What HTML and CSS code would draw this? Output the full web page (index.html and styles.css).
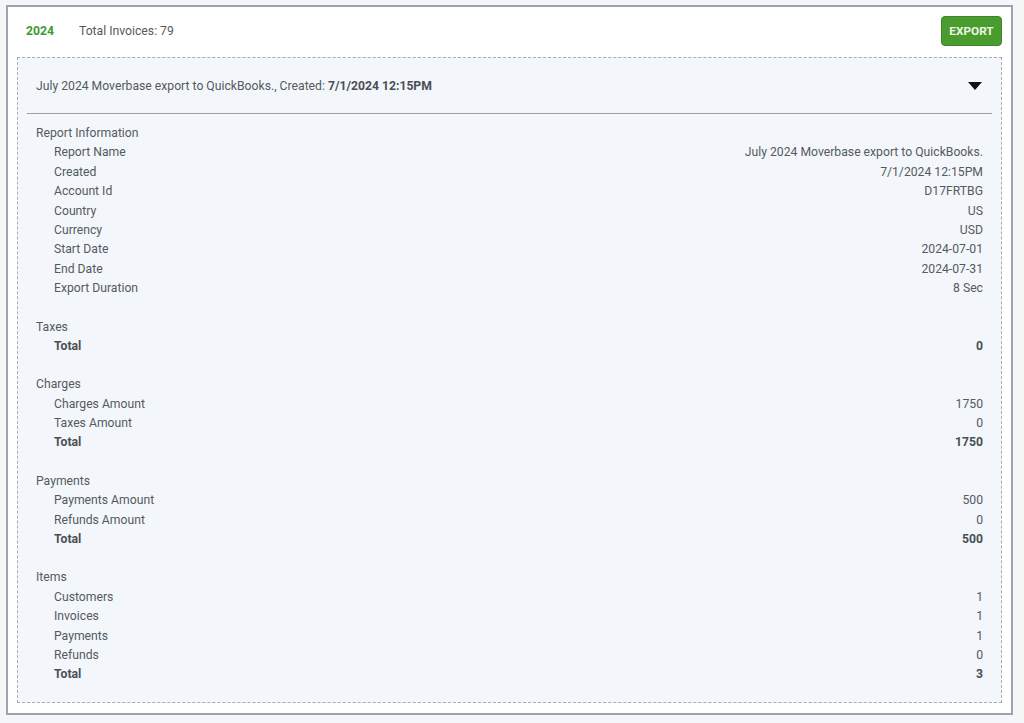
FILE: index.html
```html
<!DOCTYPE html>
<html lang="en">
<head>
<meta charset="utf-8">
<title>Exports</title>
<link rel="stylesheet" href="styles.css">
</head>
<body>
<div class="card">
  <div class="card-head">
    <span class="year">2024</span>
    <span class="count">Total Invoices: 79</span>
    <button class="export-btn">EXPORT</button>
  </div>
  <div class="report">
    <div class="report-head">
      <span class="report-title">July 2024 Moverbase export to QuickBooks., Created: <b>7/1/2024 12:15PM</b></span>
      <svg class="caret" width="14" height="8" viewBox="0 0 14 8"><path d="M0 0 H14 L7 8 Z" fill="#111"/></svg>
    </div>
    <div class="report-body">
      <div class="section">
        <div class="sec-title">Report Information</div>
        <div class="row"><span>Report Name</span><span>July 2024 Moverbase export to QuickBooks.</span></div>
        <div class="row"><span>Created</span><span>7/1/2024 12:15PM</span></div>
        <div class="row"><span>Account Id</span><span>D17FRTBG</span></div>
        <div class="row"><span>Country</span><span>US</span></div>
        <div class="row"><span>Currency</span><span>USD</span></div>
        <div class="row"><span>Start Date</span><span>2024-07-01</span></div>
        <div class="row"><span>End Date</span><span>2024-07-31</span></div>
        <div class="row"><span>Export Duration</span><span>8 Sec</span></div>
      </div>
      <div class="section">
        <div class="sec-title">Taxes</div>
        <div class="row total"><span>Total</span><span>0</span></div>
      </div>
      <div class="section">
        <div class="sec-title">Charges</div>
        <div class="row"><span>Charges Amount</span><span>1750</span></div>
        <div class="row"><span>Taxes Amount</span><span>0</span></div>
        <div class="row total"><span>Total</span><span>1750</span></div>
      </div>
      <div class="section">
        <div class="sec-title">Payments</div>
        <div class="row"><span>Payments Amount</span><span>500</span></div>
        <div class="row"><span>Refunds Amount</span><span>0</span></div>
        <div class="row total"><span>Total</span><span>500</span></div>
      </div>
      <div class="section">
        <div class="sec-title">Items</div>
        <div class="row"><span>Customers</span><span>1</span></div>
        <div class="row"><span>Invoices</span><span>1</span></div>
        <div class="row"><span>Payments</span><span>1</span></div>
        <div class="row"><span>Refunds</span><span>0</span></div>
        <div class="row total"><span>Total</span><span>3</span></div>
      </div>
    </div>
  </div>
</div>
</body>
</html>
```

FILE: styles.css
```css
* { box-sizing: border-box; }
html, body {
  margin: 0;
  padding: 0;
  background: #f5f6f8;
}
body {
  font-family: Roboto, "Liberation Sans", Arial, sans-serif;
  font-size: 12.2px;
  color: #555a5f;
}
.card {
  width: 1007px;
  margin: 5px 0 0 6px;
  background: #ffffff;
  border: 2px solid #9ca3b2;
  padding: 0 9px 10px 9px;
}
.card-head {
  height: 48px;
  display: flex;
  align-items: center;
  padding-left: 9px;
  margin-bottom: 2px;
}
.year {
  color: #3d9a2e;
  font-weight: 700;
}
.count {
  margin-left: 25px;
  color: #555a5f;
}
.export-btn {
  margin-left: auto;
  width: 61px;
  height: 30px;
  border: 1px solid #3c8526;
  border-radius: 4px;
  background: #4b9c2f;
  color: #eaf6e4;
  font-family: Roboto, "Liberation Sans", Arial, sans-serif;
  font-size: 11.8px;
  font-weight: 700;
  padding: 0;
}
.report {
  border: 1px dashed #a9adb3;
  background: #f3f7fb;
}
.report-head {
  height: 56px;
  margin: 0 9px;
  padding: 0 10px 0 9px;
  border-bottom: 1px solid #9aa0a8;
  display: flex;
  align-items: center;
  justify-content: space-between;
}
.report-title b { font-weight: 700; color: #4a4f55; }
.caret { display: block; margin-top: 1px; }
.report-body {
  padding: 10px 18px 17px 18px;
}
.section + .section { margin-top: 18.9px; }
.sec-title, .row { line-height: 19.4px; }
.row {
  display: flex;
  justify-content: space-between;
  padding-left: 18px;
}
.row.total { font-weight: 700; color: #4a4f55; }
```
